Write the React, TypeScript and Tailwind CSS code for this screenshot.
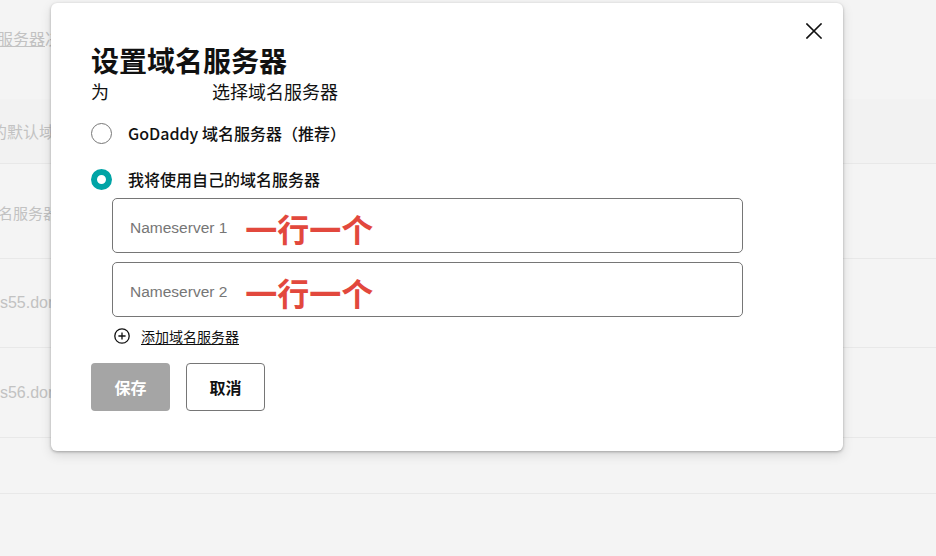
import React from "react";

function CloseIcon() {
  return (
    <svg width="16" height="16" viewBox="0 0 16 16" fill="none" stroke="#111" strokeWidth="1.6" strokeLinecap="square">
      <path d="M1 1 L15 15 M15 1 L1 15" />
    </svg>
  );
}

function PlusCircle() {
  return (
    <svg width="16" height="16" viewBox="0 0 16 16" fill="none" stroke="#111" strokeWidth="1.3">
      <circle cx="8" cy="8" r="7.2" />
      <path d="M8 4.4 V11.6 M4.4 8 H11.6" />
    </svg>
  );
}

function NameserverField({ label }: { label: string }) {
  return (
    <div className="h-[55px] border border-[#767676] rounded-[5px] flex items-center pl-[17px] pt-[4px] bg-white">
      <span className="font-['Liberation_Sans','Noto_Sans',sans-serif] text-[15.5px] text-[#767676]">{label}</span>
      <span className="ml-[18px] text-[32px] leading-none font-bold text-[#e2483d]">一行一个</span>
    </div>
  );
}

export default function App() {
  return (
    <div className="relative w-[936px] h-[556px] overflow-hidden bg-[#f4f4f4] font-['Noto_Sans_CJK_SC','Noto_Sans',sans-serif]">
      {/* settings page under the dialog */}
      <div className="flex flex-col text-[#c2c2c2] whitespace-nowrap">
        <div className="h-[99px] pt-[27px]">
          <div className="w-[51px] overflow-hidden">
            <div className="text-[16px] leading-[22px] -ml-[3px]">
              <span className="underline">服务器</span>决定
            </div>
          </div>
        </div>
        <div className="h-[64px] flex items-center bg-[#f2f2f2]">
          <div className="w-[51px] overflow-hidden">
            <div className="text-[16px] -ml-[9px]">的默认域名</div>
          </div>
        </div>
        <div className="h-[95px] border-t border-[#e8e8e8] flex items-center pt-[5px]">
          <div className="w-[51px] overflow-hidden">
            <div className="text-[15px] -ml-[17px]">域名服务器</div>
          </div>
        </div>
        <div className="h-[89px] border-t border-[#e8e8e8] flex items-center">
          <div className="w-[51px] overflow-hidden">
            <div className="font-['Liberation_Sans',sans-serif] text-[16px] -ml-[9px]">ns55.dom</div>
          </div>
        </div>
        <div className="h-[90px] border-t border-[#e8e8e8] flex items-center">
          <div className="w-[51px] overflow-hidden">
            <div className="font-['Liberation_Sans',sans-serif] text-[16px] -ml-[9px]">ns56.dom</div>
          </div>
        </div>
        <div className="h-[56px] border-t border-[#e8e8e8]" />
        <div className="h-[63px] border-t border-[#e8e8e8]" />
      </div>

      {/* dialog */}
      <div className="absolute left-[51px] top-[3px] w-[792px] h-[448px] bg-white rounded-[6px] shadow-[0_1px_3px_rgba(0,0,0,0.28),0_4px_12px_rgba(0,0,0,0.12)] pl-[40px] pt-[39px] text-[#111]">
        <button className="absolute right-[21px] top-[20px] w-4 h-4">
          <CloseIcon />
        </button>

        <h2 className="text-[28px] leading-[36px] font-bold">设置域名服务器</h2>
        <p className="flex text-[18px] leading-[26px]">
          <span>为</span>
          <span className="inline-block w-[103px]" />
          <span>选择域名服务器</span>
        </p>

        <div className="mt-[17px] h-[24px] flex items-center">
          <span className="w-[21px] h-[21px] rounded-full border border-[#777] bg-white" />
          <span className="ml-[16px] text-[16px] font-medium">GoDaddy 域名服务器（推荐）</span>
        </div>
        <div className="mt-[22px] h-[24px] flex items-center">
          <span className="w-[21px] h-[21px] rounded-full border-[6px] border-[#00a4a6] bg-white" />
          <span className="ml-[16px] text-[16px] font-medium">我将使用自己的域名服务器</span>
        </div>

        <div className="mt-[7px] ml-[21px] w-[631px] flex flex-col gap-[9px]">
          <NameserverField label="Nameserver 1" />
          <NameserverField label="Nameserver 2" />
        </div>

        <div className="mt-[9px] ml-[23px] h-[20px] flex items-center gap-[11px]">
          <PlusCircle />
          <span className="text-[14px] underline underline-offset-2">添加域名服务器</span>
        </div>

        <div className="mt-[17px] flex gap-[16px]">
          <button className="w-[79px] h-[48px] rounded-[4px] bg-[#a5a5a5] text-white text-[16px] font-bold">保存</button>
          <button className="w-[79px] h-[48px] rounded-[4px] border border-[#767676] bg-white text-[#111] text-[16px] font-bold">取消</button>
        </div>
      </div>
    </div>
  );
}
